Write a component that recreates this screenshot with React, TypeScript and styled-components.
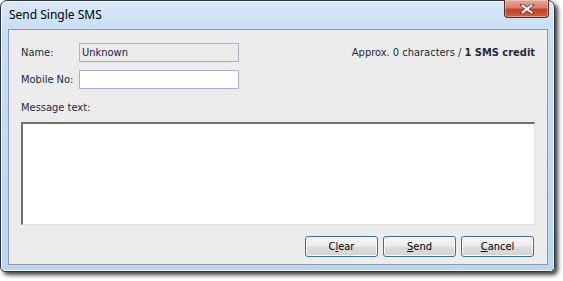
import styled, { createGlobalStyle } from "styled-components";

const GlobalStyle = createGlobalStyle`
  html, body {
    margin: 0;
    padding: 0;
    background: #ffffff;
  }
`;

const Page = styled.div`
  width: 563px;
  height: 281px;
  overflow: hidden;
  background: #ffffff;
`;

const Window = styled.div`
  width: 555px;
  height: 272px;
  box-sizing: border-box;
  display: flex;
  flex-direction: column;
  border: 1px solid #2e3640;
  border-radius: 7px 7px 5px 5px;
  background: linear-gradient(to bottom, #d9e8f8 0px, #c9def4 30px, #bcd6f1 100%);
  box-shadow: 3px 3px 4px rgba(0, 0, 0, 0.75), inset 0 0 0 1px #f4f9ff;
`;

const TitleBar = styled.div`
  height: 28px;
  display: flex;
  align-items: flex-start;
  justify-content: space-between;
  padding: 0 5px 0 8px;
`;

const Title = styled.div`
  font-family: "Noto Sans", "Open Sans", sans-serif;
  font-size: 12px;
  line-height: 16px;
  margin-top: 6px;
  color: #000000;
`;

const CloseButton = styled.div`
  width: 45px;
  height: 18px;
  box-sizing: border-box;
  margin-top: -1px;
  border: 1px solid #5e2a25;
  border-top: none;
  border-radius: 0 0 4px 4px;
  background: linear-gradient(to bottom, #e7a99c 0%, #d7806f 45%, #c3402b 55%, #cf5e45 100%);
  box-shadow: inset 0 0 0 1px rgba(255, 220, 210, 0.45);
  display: flex;
  align-items: center;
  justify-content: center;
`;

const Client = styled.div`
  flex: 1;
  margin: 0 6px 6px 7px;
  border: 1px solid #8c98a6;
  background: #ececec;
  display: flex;
  flex-direction: column;
  padding: 13px 12px 7px 12px;
  font-family: "DejaVu Sans Condensed", "DejaVu Sans", "Liberation Sans", sans-serif;
  font-stretch: condensed;
  font-size: 11px;
  color: #1e2a3a;
  white-space: nowrap;
`;

const TopArea = styled.div`
  display: flex;
  justify-content: space-between;
  align-items: flex-start;
`;

const Fields = styled.div`
  display: grid;
  grid-template-columns: 58px 160px;
  row-gap: 8px;
  align-items: center;
`;

const Label = styled.label`
  line-height: 13px;
`;

const TextBox = styled.div<{ $readOnly?: boolean }>`
  height: 19px;
  box-sizing: border-box;
  border: 1px solid #abadd3;
  background: ${(p) => (p.$readOnly ? "#ececec" : "#ffffff")};
  padding: 0 2px;
  line-height: 17px;
  color: #1a1a50;
`;

const Credit = styled.div`
  margin-top: 3px;
  line-height: 13px;
  color: #1e2a3a;

  b {
    font-weight: bold;
  }
`;

const MessageLabel = styled.div`
  margin-top: 12px;
  margin-bottom: 7px;
  line-height: 14px;
`;

const MessageArea = styled.div`
  height: 103px;
  box-sizing: border-box;
  background: #ffffff;
  border-top: 2px solid #6f6f6f;
  border-left: 2px solid #6f6f6f;
  border-right: 1px solid #e2e2e2;
  border-bottom: 1px solid #e2e2e2;
`;

const ButtonRow = styled.div`
  display: flex;
  justify-content: flex-end;
  gap: 5px;
  margin-top: 11px;
  padding-right: 1px;
`;

const Button = styled.div`
  width: 73px;
  height: 21px;
  box-sizing: border-box;
  border: 1px solid #3c6e9e;
  border-radius: 3px;
  background: linear-gradient(to bottom, #f6f6f6 0%, #ececec 48%, #dcdcdc 52%, #d3d3d3 100%);
  box-shadow: inset 0 0 0 1px #fbfbfb;
  display: flex;
  align-items: center;
  justify-content: center;
  color: #000000;
  line-height: 13px;

  u {
    text-decoration: underline;
    text-underline-offset: 1px;
  }
`;

function CloseGlyph() {
  return (
    <svg width="14" height="10" viewBox="0 0 14 10">
      <path
        d="M2 1 L12 9 M12 1 L2 9"
        stroke="#5a2a22"
        strokeWidth="3.4"
        strokeLinecap="square"
        fill="none"
      />
      <path
        d="M2.5 1.5 L11.5 8.5 M11.5 1.5 L2.5 8.5"
        stroke="#ffffff"
        strokeWidth="2"
        strokeLinecap="square"
        fill="none"
      />
    </svg>
  );
}

export default function App() {
  return (
    <Page>
      <GlobalStyle />
      <Window>
        <TitleBar>
          <Title>Send Single SMS</Title>
          <CloseButton>
            <CloseGlyph />
          </CloseButton>
        </TitleBar>
        <Client>
          <TopArea>
            <Fields>
              <Label>Name:</Label>
              <TextBox $readOnly>Unknown</TextBox>
              <Label>Mobile No:</Label>
              <TextBox />
            </Fields>
            <Credit>
              Approx. 0 characters / <b>1 SMS credit</b>
            </Credit>
          </TopArea>
          <MessageLabel>Message text:</MessageLabel>
          <MessageArea />
          <ButtonRow>
            <Button>
              C<u>l</u>ear
            </Button>
            <Button>
              <u>S</u>end
            </Button>
            <Button>
              <u>C</u>ancel
            </Button>
          </ButtonRow>
        </Client>
      </Window>
    </Page>
  );
}
